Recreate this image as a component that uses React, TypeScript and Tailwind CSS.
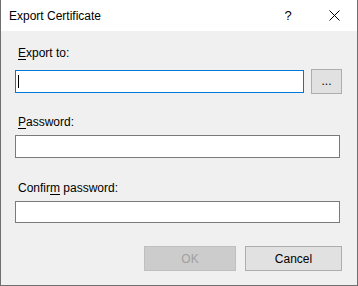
export default function App() {
  return (
    <div className="w-[358px] h-[286px] flex flex-col border-x border-b border-[#6f6f6f] bg-[#f0f0f0] font-['Liberation_Sans',Arial,sans-serif] text-[12px] text-black">
      {/* title bar */}
      <div className="flex h-[31px] shrink-0 items-center bg-white">
        <span className="pl-[8px] pt-[1px]">Export Certificate</span>
        <div className="ml-auto flex h-full">
          <div className="flex w-[46px] items-center justify-center text-[13px]">?</div>
          <div className="flex w-[46px] items-center justify-center">
            <svg width="11" height="11" viewBox="0 0 11 11">
              <path d="M0.5 0.5 L10.5 10.5 M10.5 0.5 L0.5 10.5" stroke="#000" strokeWidth="1" />
            </svg>
          </div>
        </div>
      </div>

      <div className="flex flex-1 flex-col px-[14px]">
        <label className="mt-[14px] pl-[3px] leading-[16px]">
          <u className="underline-offset-2">E</u>xport to:
        </label>
        <div className="mt-[8px] flex items-center">
          <div className="flex h-[23px] w-[289px] items-center border border-[#0078d7] bg-white pl-[2px]">
            <div className="h-[13px] w-[1px] bg-black" />
          </div>
          <button className="ml-[7px] flex h-[25px] w-[31px] items-center justify-center border border-[#adadad] bg-[#e1e1e1] pb-[2px] leading-none">
            ...
          </button>
        </div>

        <label className="mt-[20px] pl-[3px] leading-[16px]">
          <u className="underline-offset-2">P</u>assword:
        </label>
        <div className="mt-[5px] h-[23px] w-[325px] border border-[#7a7a7a] bg-white" />

        <label className="mt-[22px] pl-[3px] leading-[16px]">
          Confir<u className="underline-offset-2">m</u> password:
        </label>
        <div className="mt-[5px] h-[22px] w-[325px] border border-[#7a7a7a] bg-white" />

        <div className="mt-[23px] flex justify-end gap-[9px] pr-[1px]">
          <button className="h-[25px] w-[92px] border border-[#bfbfbf] bg-[#cccccc] text-[#a0a0a0]">OK</button>
          <button className="h-[25px] w-[97px] border border-[#adadad] bg-[#e1e1e1]">Cancel</button>
        </div>
      </div>
    </div>
  );
}
